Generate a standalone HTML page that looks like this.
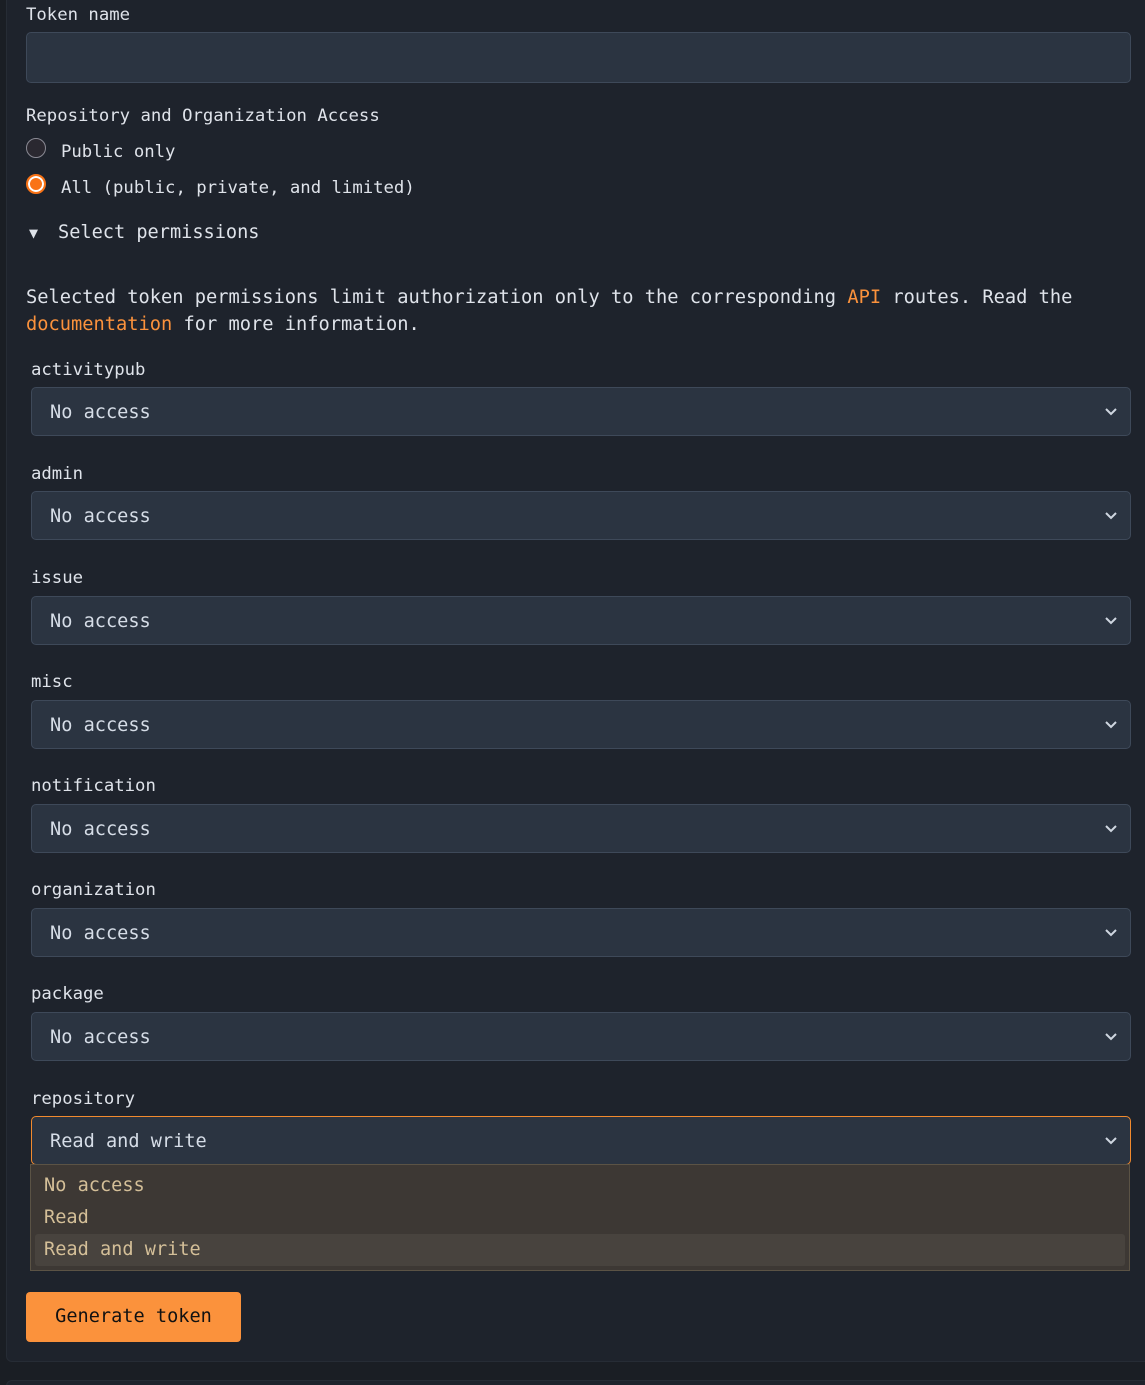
<!DOCTYPE html>
<html><head><meta charset="utf-8"><style>
*{box-sizing:border-box;margin:0;padding:0}
html,body{width:1145px;height:1385px;overflow:hidden}
body{background:#1a1e24;font-family:"DejaVu Sans Mono","Liberation Mono",monospace;color:#dfe3ea;position:relative}
.box{position:absolute;left:6px;top:-10px;width:1150px;height:1372px;background:#1e232c;border:1px solid #262c35;border-radius:6px}
.bot{position:absolute;left:6px;top:1380px;width:1150px;height:20px;background:#1e232c;border:1px solid #262c35;border-radius:6px}
.a{position:absolute;white-space:nowrap}
.lbl{font-size:17.3px;line-height:20px}
.inp{position:absolute;left:26px;top:32px;width:1105px;height:51px;background:#2b3441;border:1px solid #3e4959;border-radius:5px}
.sel{position:absolute;left:31px;width:1100px;height:49px;background:#2b3441;border:1px solid #3e4959;border-radius:5px;font-size:18.6px;line-height:49px;padding-left:18px;color:#d6dde7}
.sel svg{position:absolute;right:12px;top:19px}
.r{position:absolute;left:26px;width:20px;height:20px;border-radius:50%}
.or{color:#fb923c}
</style></head><body>
<div class="box"></div>
<div class="bot"></div>
<div class="a lbl" style="left:26px;top:5px">Token name</div>
<div class="inp"></div>
<div class="a lbl" style="left:26px;top:106px">Repository and Organization Access</div>
<div class="r" style="top:138px;background:#2a2830;border:1.5px solid #8a8a94"></div>
<div class="a lbl" style="left:61px;top:142px">Public only</div>
<div class="r" style="top:174px;background:#f97316;border:2px solid #f97316;box-shadow:inset 0 0 0 2px #fff"></div>
<div class="a lbl" style="left:61px;top:178px">All (public, private, and limited)</div>
<div class="a" style="left:29px;top:224px;font-size:15px">▼</div>
<div class="a" style="left:58px;top:222px;font-size:18.6px">Select permissions</div>
<div class="a" style="left:26px;top:284px;font-size:18.7px;line-height:27px">Selected token permissions limit authorization only to the corresponding <span class="or">API</span> routes. Read the<br><span class="or">documentation</span> for more information.</div>

<div class="a lbl" style="left:31px;top:360px">activitypub</div>
<div class="sel" style="top:387px">No access<svg width="14" height="9" viewBox="0 0 14 9"><path d="M2 2l5 5 5-5" stroke="#cfd6e0" stroke-width="2" fill="none"/></svg></div>
<div class="a lbl" style="left:31px;top:464px">admin</div>
<div class="sel" style="top:491px">No access<svg width="14" height="9" viewBox="0 0 14 9"><path d="M2 2l5 5 5-5" stroke="#cfd6e0" stroke-width="2" fill="none"/></svg></div>
<div class="a lbl" style="left:31px;top:568px">issue</div>
<div class="sel" style="top:596px">No access<svg width="14" height="9" viewBox="0 0 14 9"><path d="M2 2l5 5 5-5" stroke="#cfd6e0" stroke-width="2" fill="none"/></svg></div>
<div class="a lbl" style="left:31px;top:672px">misc</div>
<div class="sel" style="top:700px">No access<svg width="14" height="9" viewBox="0 0 14 9"><path d="M2 2l5 5 5-5" stroke="#cfd6e0" stroke-width="2" fill="none"/></svg></div>
<div class="a lbl" style="left:31px;top:776px">notification</div>
<div class="sel" style="top:804px">No access<svg width="14" height="9" viewBox="0 0 14 9"><path d="M2 2l5 5 5-5" stroke="#cfd6e0" stroke-width="2" fill="none"/></svg></div>
<div class="a lbl" style="left:31px;top:880px">organization</div>
<div class="sel" style="top:908px">No access<svg width="14" height="9" viewBox="0 0 14 9"><path d="M2 2l5 5 5-5" stroke="#cfd6e0" stroke-width="2" fill="none"/></svg></div>
<div class="a lbl" style="left:31px;top:984px">package</div>
<div class="sel" style="top:1012px">No access<svg width="14" height="9" viewBox="0 0 14 9"><path d="M2 2l5 5 5-5" stroke="#cfd6e0" stroke-width="2" fill="none"/></svg></div>
<div class="a lbl" style="left:31px;top:1089px">repository</div>
<div class="sel" style="top:1116px;border-color:#f28a2e">Read and write<svg width="14" height="9" viewBox="0 0 14 9"><path d="M2 2l5 5 5-5" stroke="#cfd6e0" stroke-width="2" fill="none"/></svg></div>
<div class="a" style="left:30px;top:1164px;width:1100px;height:107px;background:#3d3834;border:1px solid #5b5345"></div>
<div class="a" style="left:35px;top:1234px;width:1090px;height:32px;background:#48433e;border-radius:3px"></div>
<div class="a" style="left:44px;top:1170px;font-size:18.6px;line-height:32px;color:#d4bf98">No access<br>Read<br>Read and write</div>
<div class="a" style="left:26px;top:1292px;width:215px;height:50px;background:#fb923c;border-radius:4px;color:#111;font-size:18.6px;line-height:50px;text-align:center">Generate token</div>
</body></html>
